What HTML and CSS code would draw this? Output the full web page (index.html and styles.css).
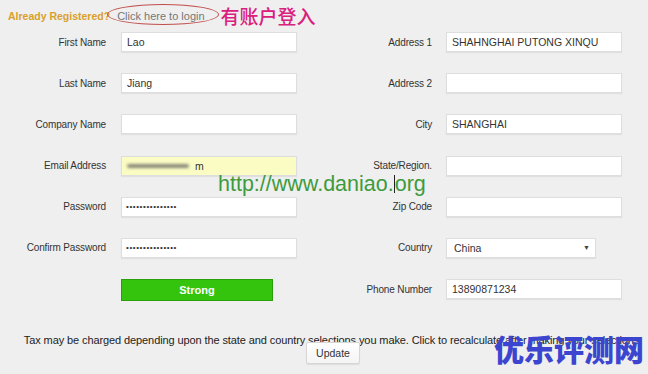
FILE: index.html
```html
<!DOCTYPE html>
<html>
<head>
<meta charset="utf-8">
<link rel="stylesheet" href="styles.css">
</head>
<body>
<div class="page">
  <div class="top">
    <span class="already">Already Registered?</span>
    <a class="login">Click here to login</a>
    <span class="ann-cn">有账户登入</span>
    <span class="ellipse"></span>
  </div>
  <div class="form">
    <label class="lab">First Name</label>
    <input class="fld" type="text" value="Lao">
    <label class="lab lab-r">Address 1</label>
    <input class="fld" type="text" value="SHAHNGHAI PUTONG XINQU">

    <label class="lab">Last Name</label>
    <input class="fld" type="text" value="Jiang">
    <label class="lab lab-r">Address 2</label>
    <input class="fld" type="text" value="">

    <label class="lab">Company Name</label>
    <input class="fld" type="text" value="">
    <label class="lab lab-r">City</label>
    <input class="fld" type="text" value="SHANGHAI">

    <label class="lab">Email Address</label>
    <div class="fld email"><span class="smear"></span><span>m</span></div>
    <label class="lab lab-r">State/Region.</label>
    <input class="fld up" type="text" value="">

    <label class="lab">Password</label>
    <div class="fld pw">•••••••••••••••</div>
    <label class="lab lab-r">Zip Code</label>
    <input class="fld up" type="text" value="">

    <label class="lab">Confirm Password</label>
    <div class="fld pw">•••••••••••••••</div>
    <label class="lab lab-r">Country</label>
    <div class="fld sel"><span>China</span><span class="arrow">▼</span></div>

    <span></span>
    <div class="strong">Strong</div>
    <label class="lab lab-r">Phone Number</label>
    <input class="fld" type="text" value="13890871234">
  </div>
  <div class="bottom">
    <p class="tax">Tax may be charged depending upon the state and country selections you make. Click to recalculate after making your selections.</p>
    <button class="update">Update</button>
  </div>
  <div class="wm-url">http://www.daniao.<span class="caret"></span>org</div>
  <div class="wm-cn">优乐评测网</div>
</div>
</body>
</html>
```
FILE: styles.css
```css
html, body {
  margin: 0;
  padding: 0;
  background: #efefef;
}
.page {
  position: relative;
  width: 648px;
  height: 374px;
  font-family: "Liberation Sans", Arial, sans-serif;
  font-size: 11px;
  color: #333;
  overflow: hidden;
}
.top {
  position: relative;
  display: flex;
  align-items: center;
  height: 30px;
  padding-left: 8px;
  box-sizing: border-box;
  padding-top: 1px;
}
.already {
  font-weight: bold;
  font-size: 10.5px;
  color: #d9a02c;
}
.login {
  color: #777;
  font-size: 11px;
  margin-left: 7px;
}
.ann-cn {
  font-family: "Noto Sans CJK SC", sans-serif;
  font-size: 19px;
  font-weight: 500;
  color: #d9207d;
  margin-left: 16px;
  line-height: 20px;
}
.ellipse {
  position: absolute;
  left: 107px;
  top: 4px;
  width: 112px;
  height: 21px;
  border: 1.5px solid #c0504d;
  border-radius: 50%;
  box-sizing: border-box;
}
.form {
  display: grid;
  grid-template-columns: 121px 176px 149px 176px;
  grid-auto-rows: 20px;
  row-gap: 21.2px;
  margin-top: 2px;
}
.lab {
  padding-right: 15px;
  text-align: right;
  align-self: center;
  color: #333;
  font-size: 10px;
  letter-spacing: -0.15px;
}
.lab-r {
  padding-right: 14px;
}
.up {
  margin-top: -3px;
}
.fld {
  box-sizing: border-box;
  height: 20px;
  width: 176px;
  margin: 0;
  border: 1px solid #dedede;
  background: #fff;
  padding: 0 5px;
  font-family: "Liberation Sans", Arial, sans-serif;
  font-size: 10.5px;
  color: #333;
  box-shadow: 0 1px 1px rgba(0,0,0,0.06);
  outline: none;
  display: flex;
  align-items: center;
}
.email {
  background: #fbfcc4;
}
.smear {
  display: inline-block;
  width: 62px;
  height: 4px;
  background: #8a8a7a;
  filter: blur(1.5px);
  margin-right: 6px;
  border-radius: 3px;
}
.pw {
  font-size: 8px;
  letter-spacing: 0.6px;
  padding-left: 4px;
  color: #333;
}
.sel {
  width: 150px;
  justify-content: space-between;
  padding: 0 5px 0 7px;
}
.arrow {
  font-size: 7px;
  color: #444;
}
.strong {
  box-sizing: border-box;
  width: 152px;
  height: 22px;
  background: #35c40e;
  border: 1px solid #2aa00a;
  color: #fff;
  font-weight: bold;
  display: flex;
  align-items: center;
  justify-content: center;
}
.bottom {
  display: flex;
  flex-direction: column;
  align-items: center;
  margin-top: 34px;
  padding-left: 18px;
}
.tax {
  margin: 0;
  white-space: nowrap;
  font-size: 11px;
  letter-spacing: -0.1px;
  color: #222;
  line-height: 14px;
}
.update {
  margin-top: -5px;
  height: 22px;
  padding: 0 9px;
  font-family: "Liberation Sans", Arial, sans-serif;
  font-size: 10.5px;
  color: #333;
  background: linear-gradient(#fff, #f4f4f4);
  border: 1px solid #d6d6d6;
  border-radius: 2px;
  box-shadow: 0 1px 1px rgba(0,0,0,0.08);
}
.wm-url {
  position: absolute;
  left: 218px;
  top: 172px;
  font-size: 21.5px;
  color: #3d9b3d;
  line-height: 24px;
}
.caret {
  display: inline-block;
  width: 1px;
  height: 18px;
  background: #222;
  vertical-align: -2px;
}
.wm-cn {
  position: absolute;
  left: 494px;
  top: 327px;
  font-family: "Noto Sans CJK SC", sans-serif;
  font-weight: 900;
  font-size: 30px;
  line-height: 42px;
  color: #3b45d0;
}
```
